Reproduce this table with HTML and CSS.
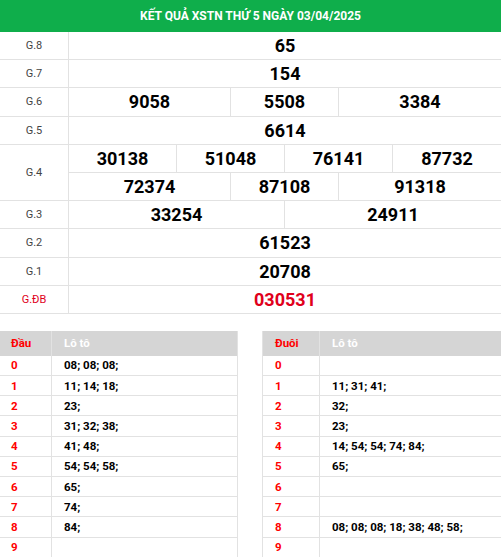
FILE: index.html
```html
<!DOCTYPE html>
<html lang="vi">
<head>
<meta charset="utf-8">
<link rel="stylesheet" href="styles.css">
</head>
<body>
<div class="kq">
  <div class="title">KẾT QUẢ XSTN THỨ 5 NGÀY 03/04/2025</div>
  <div class="prizes">
    <div class="lbl">G.8</div><div class="num s8 end">65</div>
    <div class="lbl">G.7</div><div class="num s8 end">154</div>
    <div class="lbl">G.6</div><div class="num s3">9058</div><div class="num s2">5508</div><div class="num s3 end">3384</div>
    <div class="lbl">G.5</div><div class="num s8 end">6614</div>
    <div class="lbl r2">G.4</div><div class="num s2">30138</div><div class="num s2">51048</div><div class="num s2">76141</div><div class="num s2 end">87732</div>
    <div class="num s3">72374</div><div class="num s2">87108</div><div class="num s3 end">91318</div>
    <div class="lbl">G.3</div><div class="num s4">33254</div><div class="num s4 end">24911</div>
    <div class="lbl">G.2</div><div class="num s8 end">61523</div>
    <div class="lbl">G.1</div><div class="num s8 end">20708</div>
    <div class="lbl red">G.ĐB</div><div class="num s8 end red">030531</div>
  </div>
  <div class="loto">
    <table class="lt left">
      <thead><tr><th class="c1">Đầu</th><th>Lô tô</th></tr></thead>
      <tbody>
        <tr><td class="c1">0</td><td>08; 08; 08;</td></tr>
        <tr><td class="c1">1</td><td>11; 14; 18;</td></tr>
        <tr><td class="c1">2</td><td>23;</td></tr>
        <tr><td class="c1">3</td><td>31; 32; 38;</td></tr>
        <tr><td class="c1">4</td><td>41; 48;</td></tr>
        <tr><td class="c1">5</td><td>54; 54; 58;</td></tr>
        <tr><td class="c1">6</td><td>65;</td></tr>
        <tr><td class="c1">7</td><td>74;</td></tr>
        <tr><td class="c1">8</td><td>84;</td></tr>
        <tr><td class="c1">9</td><td></td></tr>
      </tbody>
    </table>
    <table class="lt right">
      <thead><tr><th class="c1">Đuôi</th><th>Lô tô</th></tr></thead>
      <tbody>
        <tr><td class="c1">0</td><td></td></tr>
        <tr><td class="c1">1</td><td>11; 31; 41;</td></tr>
        <tr><td class="c1">2</td><td>32;</td></tr>
        <tr><td class="c1">3</td><td>23;</td></tr>
        <tr><td class="c1">4</td><td>14; 54; 54; 74; 84;</td></tr>
        <tr><td class="c1">5</td><td>65;</td></tr>
        <tr><td class="c1">6</td><td></td></tr>
        <tr><td class="c1">7</td><td></td></tr>
        <tr><td class="c1">8</td><td>08; 08; 08; 18; 38; 48; 58;</td></tr>
        <tr><td class="c1">9</td><td></td></tr>
      </tbody>
    </table>
  </div>
</div>
</body>
</html>
```
FILE: styles.css
```css
html, body {
  margin: 0;
  padding: 0;
  background: #fff;
}
body {
  font-family: Roboto, "Liberation Sans", Arial, sans-serif;
  color: #000;
  overflow: hidden;
}
.kq {
  width: 501px;
}
.title {
  height: 32px;
  background: #0fae4b;
  color: #fff;
  font-weight: 700;
  font-size: 12px;
  display: flex;
  align-items: center;
  justify-content: center;
}
.prizes {
  display: grid;
  grid-template-columns: 69px repeat(8, 1fr);
  grid-auto-rows: 28.2px;
}
.prizes > div {
  box-sizing: border-box;
  border-bottom: 1px solid #e2e2e2;
  display: flex;
  align-items: center;
  justify-content: center;
}
.lbl {
  grid-column: 1;
  font-size: 11px;
  color: #444;
  border-right: 1px solid #e2e2e2;
}
.lbl.r2 {
  grid-row: span 2;
}
.num {
  font-size: 18px;
  font-weight: 700;
  border-right: 1px solid #e2e2e2;
}
.num.end { border-right: none; }
.num.s8 { grid-column: span 8; }
.num.s4 { grid-column: span 4; }
.num.s3 { grid-column: span 3; }
.num.s2 { grid-column: span 2; }
.lbl.red, .num.red {
  color: #e0001b;
}
.loto {
  display: flex;
  justify-content: space-between;
  margin-top: 17px;
}
.lt {
  border-collapse: collapse;
  table-layout: fixed;
  font-size: 11.5px;
}
.lt.left {
  width: 239px;
  margin-left: -1px;
}
.lt.right {
  width: 241px;
  margin-right: -2px;
}
.lt th, .lt td {
  text-align: left;
  padding: 0 0 0 12px;
  font-weight: 700;
  border: 1px solid #e2e2e2;
  border-top: none;
}
.lt th {
  height: 25px;
  background: #d5d5d5;
  color: #fff;
  border-bottom: none;
  border-left-color: #eaeaea;
}
.lt thead tr th:first-child {
  border-left-color: #e2e2e2;
}
.lt td {
  height: 19.2px;
}
.lt .c1 {
  color: #ff0000;
}
.lt.left .c1 { width: 40px; padding-left: 11px; }
.lt.right .c1 { width: 44px; }
```
